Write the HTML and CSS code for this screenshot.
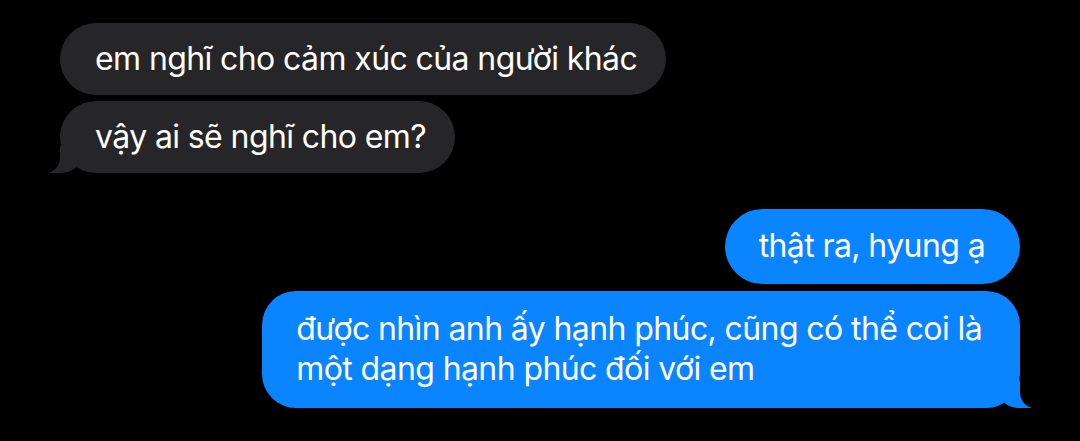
FILE: index.html
```html
<!DOCTYPE html>
<html lang="vi">
<head>
<meta charset="utf-8">
<link rel="stylesheet" href="styles.css">
</head>
<body>
<main class="chat">
  <section class="group group-in">
    <div class="bubble in">em nghĩ cho cảm xúc của người khác</div>
    <div class="bubble in tail">vậy ai sẽ nghĩ cho em?</div>
  </section>
  <section class="group group-out">
    <div class="bubble out">thật ra, hyung ạ</div>
    <div class="bubble out tail multi">được nhìn anh ấy hạnh phúc, cũng có thể coi là<br>một dạng hạnh phúc đối với em</div>
  </section>
</main>
</body>
</html>
```
FILE: styles.css
```css
html, body {
  margin: 0;
  padding: 0;
  background: #000;
}
body {
  width: 1080px;
  height: 441px;
  overflow: hidden;
  font-family: Inter, "Noto Sans", sans-serif;
  color: #fff;
}
.chat {
  display: flex;
  flex-direction: column;
  gap: 36px;
  padding: 23px 60px 0 60px;
}
.group {
  display: flex;
  flex-direction: column;
  gap: 6px;
}
.group-in { align-items: flex-start; }
.group-out { align-items: flex-end; gap: 7px; }
.bubble {
  position: relative;
  font-size: 32px;
  line-height: 40px;
  padding: 16px 29px 16px 35px;
  border-radius: 36px;
  letter-spacing: -0.6px;
}
.in { background: #262629; }
.out { background: #0a84ff; padding: 17px 35px 18px 34px; border-radius: 38px; }
.out.multi { padding: 18px 38px 19px 34px; border-radius: 34px; }
.tail::before, .tail::after {
  content: "";
  position: absolute;
  bottom: 0;
  height: 27px;
}
.in.tail::before {
  left: -10px;
  width: 30px;
  background: #262629;
  border-bottom-right-radius: 20px 14px;
}
.in.tail::after {
  left: -30px;
  width: 30px;
  background: #000;
  border-bottom-right-radius: 14px 16px;
}
.out.tail::before {
  right: -12px;
  width: 32px;
  background: #0a84ff;
  border-bottom-left-radius: 20px 14px;
}
.out.tail::after {
  right: -32px;
  width: 32px;
  background: #000;
  border-bottom-left-radius: 14px 16px;
}
```
